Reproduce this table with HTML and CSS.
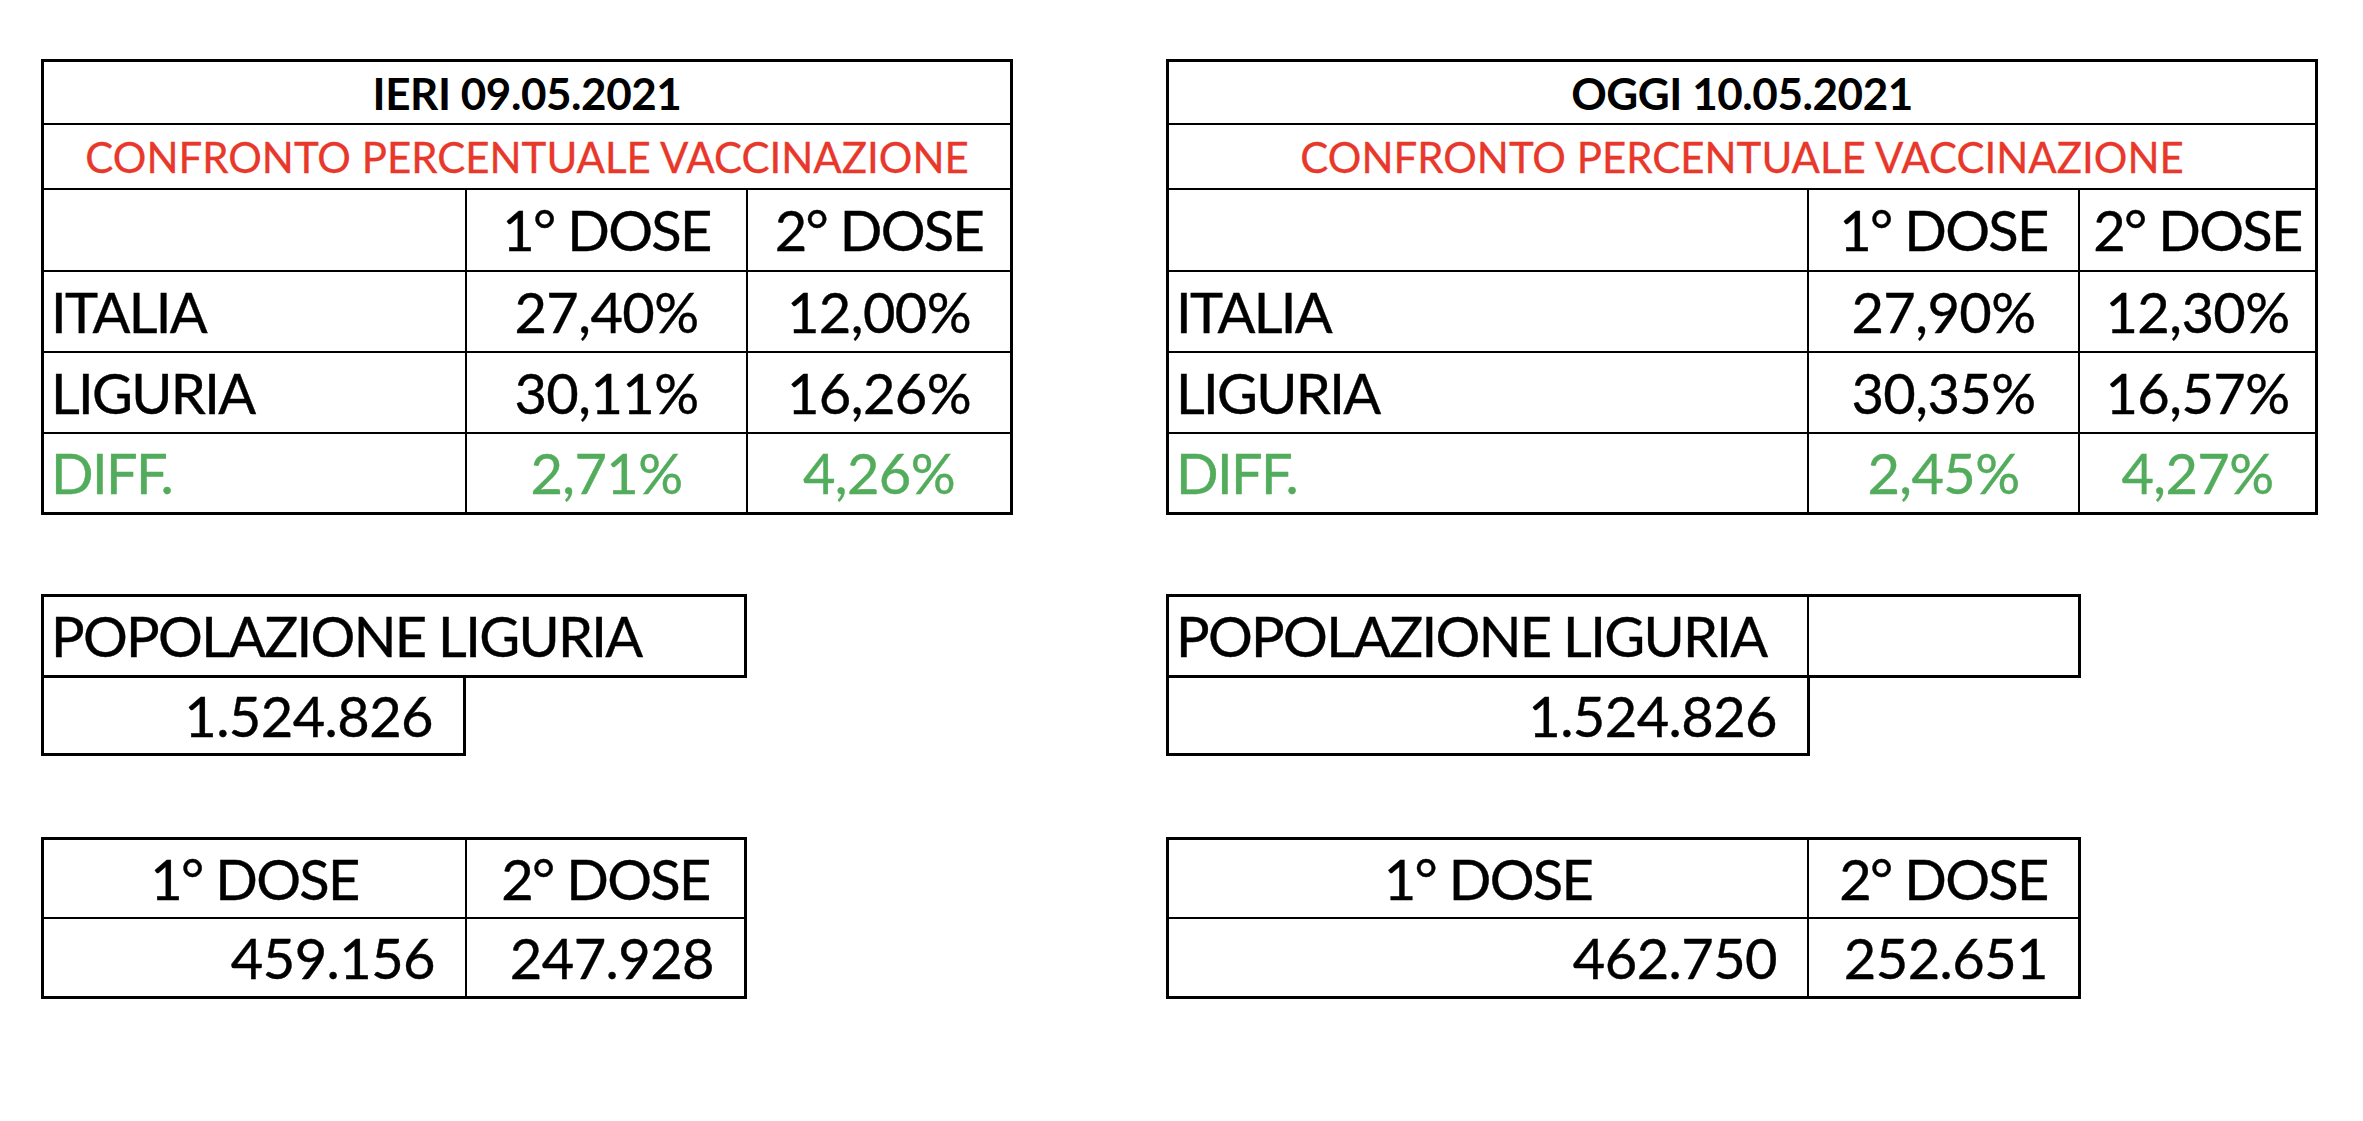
FILE: index.html
```html
<!DOCTYPE html>
<html lang="it">
<head>
<meta charset="utf-8">
<title>Confronto vaccinazione</title>
<link rel="stylesheet" href="styles.css">
</head>
<body>
<main class="page">
  <section class="panel">
    <div class="grid t-main t-left">
      <div class="c span3 title">IERI 09.05.2021</div>
      <div class="c span3 sub">CONFRONTO PERCENTUALE VACCINAZIONE</div>
      <div class="c"></div>
      <div class="c ctr big txt">1° DOSE</div>
      <div class="c ctr big txt">2° DOSE</div>
      <div class="c lbl big txt">ITALIA</div>
      <div class="c ctr big">27,40%</div>
      <div class="c ctr big">12,00%</div>
      <div class="c lbl big txt">LIGURIA</div>
      <div class="c ctr big">30,11%</div>
      <div class="c ctr big">16,26%</div>
      <div class="c lbl big txt green">DIFF.</div>
      <div class="c ctr big green">2,71%</div>
      <div class="c ctr big green">4,26%</div>
    </div>
    <div class="popwrap">
      <div class="grid t-pop-left">
        <div class="c lbl big txt">POPOLAZIONE LIGURIA</div>
      </div>
      <div class="valbox vb-left big">1.524.826</div>
    </div>
    <div class="grid t-dose-left">
      <div class="c ctr big txt">1° DOSE</div>
      <div class="c ctr big txt">2° DOSE</div>
      <div class="c num big">459.156</div>
      <div class="c num big">247.928</div>
    </div>
  </section>

  <section class="panel">
    <div class="grid t-main t-right">
      <div class="c span3 title">OGGI 10.05.2021</div>
      <div class="c span3 sub">CONFRONTO PERCENTUALE VACCINAZIONE</div>
      <div class="c"></div>
      <div class="c ctr big txt">1° DOSE</div>
      <div class="c ctr big txt">2° DOSE</div>
      <div class="c lbl big txt">ITALIA</div>
      <div class="c ctr big">27,90%</div>
      <div class="c ctr big">12,30%</div>
      <div class="c lbl big txt">LIGURIA</div>
      <div class="c ctr big">30,35%</div>
      <div class="c ctr big">16,57%</div>
      <div class="c lbl big txt green">DIFF.</div>
      <div class="c ctr big green">2,45%</div>
      <div class="c ctr big green">4,27%</div>
    </div>
    <div class="popwrap">
      <div class="grid t-pop-right">
        <div class="c lbl big txt">POPOLAZIONE LIGURIA</div>
        <div class="c"></div>
      </div>
      <div class="valbox vb-right big">1.524.826</div>
    </div>
    <div class="grid t-dose-right">
      <div class="c ctr big txt">1° DOSE</div>
      <div class="c ctr big txt">2° DOSE</div>
      <div class="c num big">462.750</div>
      <div class="c num big">252.651</div>
    </div>
  </section>
</main>
</body>
</html>
```
FILE: styles.css
```css
html, body {
  margin: 0;
  background: #ffffff;
}
body {
  font-family: Lato, "Open Sans", "Liberation Sans", sans-serif;
  color: #000000;
}
.page {
  display: flex;
  align-items: flex-start;
  gap: 153px;
  padding: 59px 0 0 41px;
}
.panel {
  display: flex;
  flex-direction: column;
  align-items: flex-start;
}
.grid {
  display: grid;
  background: #000000;
  gap: 2px;
  padding: 3px;
}
.c {
  background: #ffffff;
  display: flex;
  align-items: center;
  white-space: nowrap;
  line-height: 1;
}
.span3 {
  grid-column: span 3;
  justify-content: center;
}
.ctr { justify-content: center; }
.lbl { padding-left: 7px; }
.num { justify-content: flex-end; padding-right: 30px; }
.title { font-weight: 700; font-size: 44px; letter-spacing: -0.01em; }
.sub { color: #e8382b; font-size: 42px; -webkit-text-stroke: 0.3px currentColor; }
.big { font-size: 56px; letter-spacing: -0.01em; -webkit-text-stroke: 0.4px currentColor; }
.txt { letter-spacing: -0.03em; }
.green { color: #52ac5c; }

.t-main {
  grid-template-rows: 61px 63px 80px 79px 79px 78px;
  margin-bottom: 79px;
}
.t-left { grid-template-columns: 421px 279px 262px; }
.t-right { grid-template-columns: 638px 269px 235px; }

.popwrap {
  display: flex;
  flex-direction: column;
  align-items: flex-start;
  margin-bottom: 81px;
}
.t-pop-left {
  grid-template-columns: 700px;
  grid-template-rows: 78px;
}
.t-pop-right {
  grid-template-columns: 638px 269px;
  grid-template-rows: 78px;
}
.valbox {
  box-sizing: border-box;
  height: 78px;
  border: 3px solid #000000;
  border-top: none;
  display: flex;
  align-items: center;
  justify-content: flex-end;
  padding-right: 30px;
  line-height: 1;
}
.vb-left { width: 425px; }
.vb-right { width: 644px; }

.t-dose-left {
  grid-template-columns: 421px 277px;
  grid-template-rows: 77px 77px;
}
.t-dose-right {
  grid-template-columns: 638px 269px;
  grid-template-rows: 77px 77px;
}
```
